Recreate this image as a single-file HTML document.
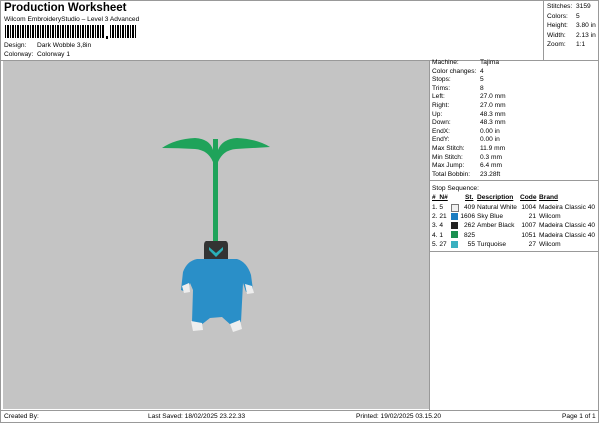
<!DOCTYPE html><html><head><style>
body{margin:0;width:600px;height:424px;background:#fff;font-family:"Liberation Sans",sans-serif;color:#000;position:relative;overflow:hidden}
.a{position:absolute;font-size:6.6px;line-height:8.5px;white-space:nowrap}
</style></head><body>
<div style="position:absolute;left:0;top:0;width:599px;height:423px;border:1px solid #999;box-sizing:border-box"></div>
<div class="a" style="left:4px;top:1px;font-size:11.5px;line-height:14px;font-weight:bold">Production Worksheet</div>
<div class="a" style="left:4px;top:16px">Wilcom EmbroideryStudio – Level 3 Advanced</div>
<div style="position:absolute;left:5px;top:25px;width:100px;height:13px;background:repeating-linear-gradient(90deg,#000 0 1px,#fff 1px 2px,#000 2px 4px,#fff 4px 5px)"></div>
<div style="position:absolute;left:106px;top:36px;width:2px;height:3px;background:#000"></div>
<div style="position:absolute;left:110px;top:25px;width:27px;height:13px;background:repeating-linear-gradient(90deg,#000 0 1px,#fff 1px 2px,#000 2px 4px,#fff 4px 5px)"></div>
<div class="a" style="left:4px;top:42px">Design:</div><div class="a" style="left:37px;top:42px">Dark Wobble 3,8in</div>
<div class="a" style="left:4px;top:51px">Colorway:</div><div class="a" style="left:37px;top:51px">Colorway 1</div>
<div style="position:absolute;left:543px;top:0;width:1px;height:60px;background:#999"></div>
<div class="a" style="left:547px;top:2px;line-height:9.5px">Stitches:<br>Colors:<br>Height:<br>Width:<br>Zoom:</div>
<div class="a" style="left:576px;top:2px;line-height:9.5px">3159<br>5<br>3.80 in<br>2.13 in<br>1:1</div>
<div style="position:absolute;left:1px;top:60px;width:598px;height:1px;background:#999"></div>
<div style="position:absolute;left:3px;top:61px;width:426px;height:348px;background:#c4c4c4"></div>
<div style="position:absolute;left:429px;top:61px;width:1px;height:349px;background:#999"></div>
<div class="a" style="left:432px;top:59px;line-height:8.6px">Machine:<br>Color changes:<br>Stops:<br>Trims:<br>Left:<br>Right:<br>Up:<br>Down:<br>EndX:<br>EndY:<br>Max Stitch:<br>Min Stitch:<br>Max Jump:<br>Total Bobbin:</div>
<div class="a" style="left:480px;top:59px;line-height:8.6px">Tajima<br>4<br>5<br>8<br>27.0 mm<br>27.0 mm<br>48.3 mm<br>48.3 mm<br>0.00 in<br>0.00 in<br>11.9 mm<br>0.3 mm<br>6.4 mm<br>23.28ft</div>
<div style="position:absolute;left:430px;top:180px;width:169px;height:1px;background:#999"></div>
<div class="a" style="left:432px;top:185px">Stop Sequence:</div>
<div class="a" style="left:432px;top:194px;font-weight:bold;text-decoration:underline">#&nbsp; N#</div>
<div class="a" style="left:465px;top:194px;font-weight:bold;text-decoration:underline">St.</div>
<div class="a" style="left:477px;top:194px;font-weight:bold;text-decoration:underline">Description</div>
<div class="a" style="left:520px;top:194px;font-weight:bold;text-decoration:underline">Code</div>
<div class="a" style="left:539px;top:194px;font-weight:bold;text-decoration:underline">Brand</div>
<div class="a" style="left:432px;top:203px;line-height:9.2px">1. 5<br>2. 21<br>3. 4<br>4. 1<br>5. 27</div>
<div style="position:absolute;left:451px;top:204px;width:6px;height:6px;border:1px solid #777;background:#f0f0f0"></div>
<div style="position:absolute;left:451px;top:213px;width:7px;height:7px;background:#1a7cc0"></div>
<div style="position:absolute;left:451px;top:222px;width:7px;height:7px;background:#222"></div>
<div style="position:absolute;left:451px;top:231px;width:7px;height:7px;background:#1a9050"></div>
<div style="position:absolute;left:451px;top:241px;width:7px;height:7px;background:#3ab0c0"></div>
<div class="a" style="left:458px;top:203px;width:17px;text-align:right;line-height:9.2px">409<br>1606<br>262<br>825<br>55</div>
<div class="a" style="left:477px;top:203px;line-height:9.2px">Natural White<br>Sky Blue<br>Amber Black<br><br>Turquoise</div>
<div class="a" style="left:517px;top:203px;width:19px;text-align:right;line-height:9.2px">1004<br>21<br>1007<br>1051<br>27</div>
<div class="a" style="left:539px;top:203px;line-height:9.2px">Madeira Classic 40<br>Wilcom<br>Madeira Classic 40<br>Madeira Classic 40<br>Wilcom</div>
<div style="position:absolute;left:430px;top:251px;width:169px;height:1px;background:#999"></div>
<div style="position:absolute;left:1px;top:410px;width:598px;height:1px;background:#999"></div>
<div class="a" style="left:4px;top:413px">Created By:</div>
<div class="a" style="left:148px;top:413px">Last Saved: 18/02/2025 23.22.33</div>
<div class="a" style="left:356px;top:413px">Printed: 19/02/2025 03.15.20</div>
<div class="a" style="left:562px;top:413px">Page 1 of 1</div>
<svg style="position:absolute;left:0;top:0" width="600" height="424">
<path d="M162,148 Q175,139 195,138 Q210,139 213,150 L213,162 Q208,150 195,149 Q178,148 162,148Z" fill="#1fa35a"/>
<path d="M270,147 Q257,139 237,138 Q222,139 218,150 L218,162 Q223,150 236,149 Q254,148 270,147Z" fill="#1fa35a"/>
<rect x="213" y="139" width="5" height="103" fill="#1fa35a"/>
<path d="M206,241 L226,241 Q228,242 228,245 L228,260 L204,260 L204,245 Q204,242 206,241Z" fill="#333"/>
<path d="M209,247 L216,253 L223,247 L223,250 L216,257 L209,250Z" fill="#2ab0b8"/>
<path d="M197,259 L237,259 Q247,262 251,275 L253,290 L246,292 L243,283 L241,322 L232,326 L222,317 L210,318 L201,325 L192,322 L193,290 L190,283 L186,292 L181,290 L183,272 Q187,261 197,259Z" fill="#2a8fc8"/>
<path d="M182,286 L189,283 L190,292 L184,293Z" fill="#eee"/>
<path d="M245,284 L252,286 L254,293 L247,294Z" fill="#eee"/>
<path d="M191,321 L202,323 L203,330 L193,331Z" fill="#eee"/>
<path d="M230,324 L240,320 L242,329 L233,332Z" fill="#eee"/>
</svg>
</body></html>
